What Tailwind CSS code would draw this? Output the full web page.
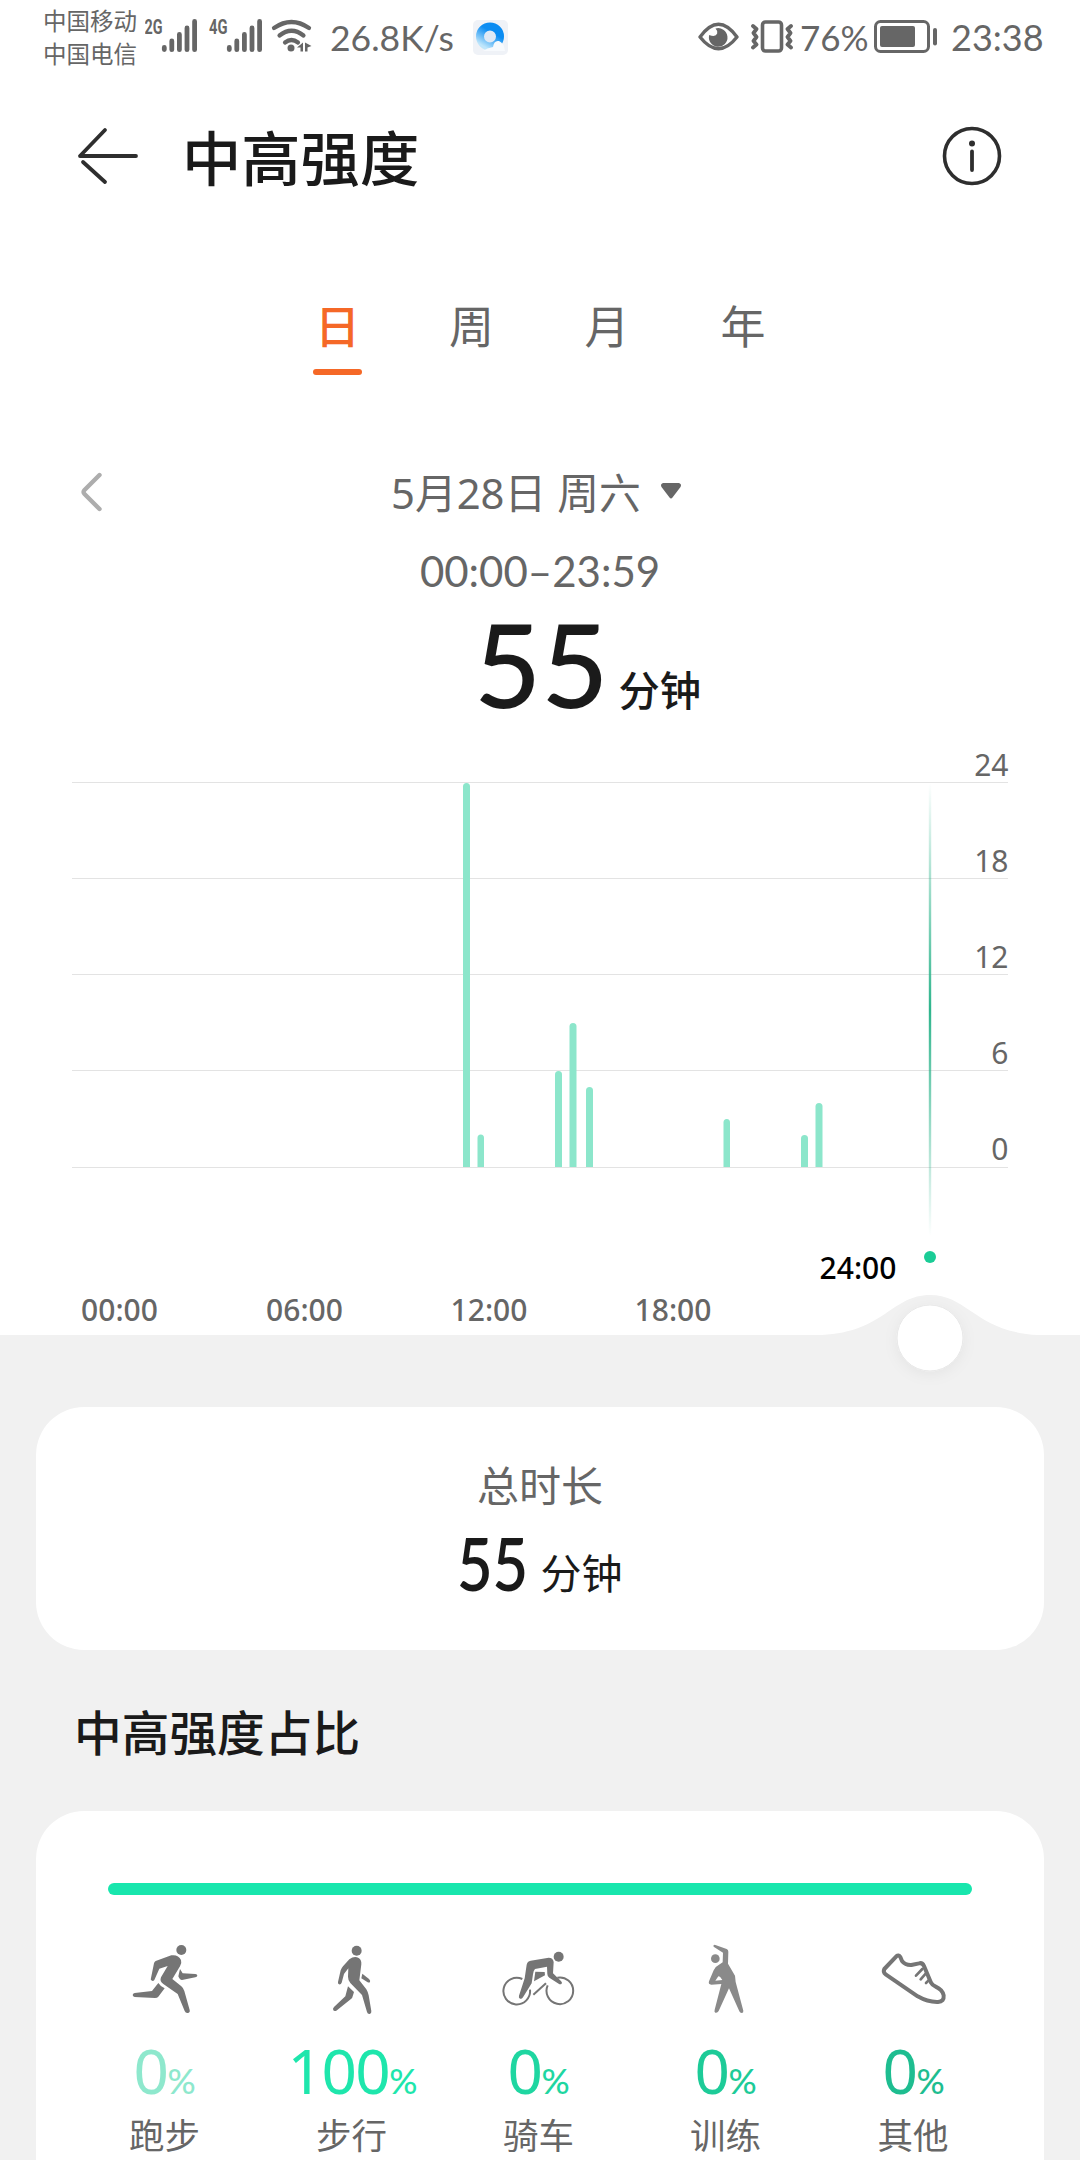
<!DOCTYPE html>
<html lang="zh-CN">
<head>
    <meta charset="UTF-8">
    <meta name="viewport" content="width=device-width, initial-scale=1.0">
    <title>中高强度</title>

    <!-- Tailwind CSS -->
    <script src="https://cdn.jsdelivr.net/npm/@tailwindcss/browser@4"></script>
</head>
<body class="w-[1080px] h-[2160px] overflow-hidden bg-white text-[#1a1a1a] font-['Noto_Sans','Noto_Sans_CJK_SC',sans-serif]">

    <!-- Status bar -->
    <div class="h-[76px] flex items-center text-[#666666] whitespace-nowrap">
        <div class="ml-[43px] w-[102px] text-[23.5px] leading-[33px] font-['Noto_Sans_CJK_SC',sans-serif] -mt-[3px]">
            <div>中国移动</div>
            <div>中国电信</div>
        </div>

        <!-- Signal 2G / 4G and wifi -->
        <svg class="w-[170px] h-[76px]" viewBox="145 0 170 76" fill="#666666">
            <g font-family="Roboto, sans-serif" font-weight="700" font-size="21">
                <text x="144.5" y="34" textLength="18" lengthAdjust="spacingAndGlyphs">2G</text>
                <text x="209" y="34" textLength="18.5" lengthAdjust="spacingAndGlyphs">4G</text>
            </g>
            <g stroke="#666666" stroke-width="4.8" stroke-linecap="round">
                <path d="M164.3 47.5v2M171.8 41v8.700M179.400 34.500v15.200M187 28v21.700M194.600 21.500v28.200" />
                <path d="M229.300 47.500v2M236.800 41v8.700M244.400 34.500v15.200M252 28v21.700M259.600 21.500v28.200" />
            </g>
            <g fill="none" stroke="#666666" stroke-width="4.2" stroke-linecap="round">
                <path d="M274 28q17.500-12 35 0" />
                <path d="M279.500 35.500q12-9.500 24 0" />
                <path d="M285 42.500q6.500-5 13 0" />
            </g>
            <circle cx="291" cy="48" r="3.500" />
            <path d="M297 47.500l6-5v9h-2.500v-4zM311.500 46l-6.500-3.500v9h2.500v-4z" />
        </svg>

        <span class="ml-[15px] w-[142px] -mt-px text-[35.500px] font-['Lato','Noto_Sans',sans-serif]">26.8K/s</span>

        <!-- Browser notification -->
        <svg class="ml-px w-[35px] h-[35px] -mt-px" viewBox="0 0 35 35">
            <defs>
                <linearGradient id="ring" x1="0.8" y1="0" x2="0.2" y2="1">
                    <stop offset="0.300" stop-color="#0a8cf2" />
                    <stop offset="1" stop-color="#bfe6fb" />
                </linearGradient>
            </defs>
            <rect width="35" height="35" rx="5" fill="#eff2f7" />
            <circle cx="17" cy="16.500" r="10" fill="#dfe9f5" stroke="url(#ring)" stroke-width="8" />
            <path d="M10 31q4-3 10-4q1-7 6-6q5 2 6 10z" fill="#f7fafd" />
        </svg>

        <div class="ml-auto mr-[37px] flex items-center">
            <!-- Eye comfort and vibrate -->
            <svg class="w-[102px] h-[76px]" viewBox="698 0 102 76">
                <path d="M700 37Q718.500 11.500 737 37Q718.500 60.500 700 37z" fill="none" stroke="#666666" stroke-width="3.400" stroke-linejoin="round" />
                <path d="M715.500 28.500a9.300 9.300 0 1 1-6.300 6.500q6.500 2.500 8-1.500q.8-2.500-1.700-5z" fill="#666666" />
                <rect x="762.500" y="22" width="19" height="29" rx="3" fill="none" stroke="#666666" stroke-width="3.600" />
                <path d="M753 26l3.500 3l-3 4l3 4l-3 4l3 3.500l-3.500 3M791 26l-3.500 3l3 4l-3 4l3 4l-3 3.500l3.500 3" fill="none" stroke="#666666" stroke-width="3.800" stroke-linecap="round" stroke-linejoin="round" />
            </svg>
            <span class="w-[74px] -mt-[2px] text-[35px] font-['Lato','Noto_Sans',sans-serif]">76%</span>
            <svg class="w-[65px] h-[76px]" viewBox="874 0 65 76" fill="#666666">
                <rect x="875.500" y="21.500" width="53" height="30" rx="5" fill="none" stroke="#666666" stroke-width="3" />
                <rect x="880" y="26" width="35" height="21" rx="2" />
                <rect x="933" y="28" width="4" height="17.500" rx="2" />
            </svg>
            <span class="ml-[12px] w-[92px] -mt-[2px] text-[36px] font-['Lato','Noto_Sans',sans-serif]">23:38</span>
        </div>
    </div>

    <!-- Title bar -->
    <header class="h-[160px] px-[78px] flex items-center">
        <svg class="w-[60px] h-[58px]" viewBox="0 0 60 58" fill="none" stroke="#2e2e2e" stroke-width="3.800" stroke-linecap="round" stroke-linejoin="round">
            <path d="M58 29H2L27 3M5 35L27 55" />
        </svg>
        <h1 class="ml-[44px] mt-[5px] text-[59.300px] leading-none font-medium">中高强度</h1>
        <svg class="ml-auto w-[60px] h-[60px]" viewBox="0 0 60 60">
            <circle cx="30" cy="30" r="27.500" fill="none" stroke="#2e2e2e" stroke-width="3.600" />
            <circle cx="30" cy="17.500" r="3" fill="#2e2e2e" />
            <path d="M30 25.500V44" stroke="#2e2e2e" stroke-width="3.800" stroke-linecap="round" />
        </svg>
    </header>

    <!-- Period tabs -->
    <nav class="h-[204px] pt-[57px] pl-[270px] flex text-[45px] leading-[68px] text-[#666666]">
        <div class="w-[135px] flex flex-col items-center text-[#f56827] font-medium">
            <span>日</span>
            <span class="mt-[8px] w-[49px] h-[6px] rounded-full bg-[#f56827]"></span>
        </div>
        <div class="w-[133px] text-center">周</div>
        <div class="w-[138px] text-center">月</div>
        <div class="w-[134px] text-center">年</div>
    </nav>

    <!-- Selected day and total -->
    <section class="h-[300px] text-[#666666]">
        <div class="h-[104px] flex items-center">
            <svg class="ml-[80px] w-[24px] h-[42px]" viewBox="0 0 24 42" fill="none" stroke="#adadad" stroke-width="4.400" stroke-linecap="round" stroke-linejoin="round">
                <path d="M19.500 4L4.500 19q-2 2 0 4L19.500 38" />
            </svg>
            <span class="ml-[287px] mt-[2px] text-[41.800px] leading-none whitespace-nowrap w-[268px]">5月28日 周六</span>
            <svg class="w-[24px] h-[18px] -mt-[3px]" viewBox="0 0 24 18" fill="#666666">
                <path d="M4 1h16q3 1 1.500 4L13.500 15.500q-1.500 2-3 0L2.500 5Q1 2 4 1z" />
            </svg>
        </div>
        <div class="h-[52px] text-[42px] leading-[54px] text-center font-['Lato','Noto_Sans',sans-serif]">00:00–23:59</div>
        <div class="h-[120px] pl-[474px] flex items-baseline text-[#1a1a1a] font-medium">
            <span class="text-[116px] leading-[132px] font-['Lato','Noto_Sans',sans-serif]"><span class="relative top-[2px]">55</span></span>
            <span class="ml-[10px] text-[41.300px]">分钟</span>
        </div>
    </section>

    <!-- Minutes per half hour -->
    <svg class="block w-[1080px] h-[660px]" viewBox="0 740 1080 660">
        <defs>
            <linearGradient id="cursor" x1="0" y1="0" x2="0" y2="1">
                <stop offset="0" stop-color="#2fb58d" stop-opacity="0" />
                <stop offset="0.500" stop-color="#2fb58d" />
                <stop offset="1" stop-color="#2fb58d" stop-opacity="0" />
            </linearGradient>
            <filter id="shadow" x="-50%" y="-50%" width="200%" height="200%">
                <feDropShadow dx="0" dy="3" stdDeviation="7" flood-color="#000000" flood-opacity="0.050" />
            </filter>
        </defs>
        <path d="M72 782.500H1008M72 878.500H1008M72 974.500H1008M72 1070.500H1008M72 1167.500H1008" stroke="#e3e3e3" />
        <g fill="#8ce6cb">
            <path d="M463 1167V786.500q0-3.500 3.500-3.500t3.500 3.500V1167z" />
            <path d="M477.500 1167v-29q0-3.500 3.250-3.500t3.250 3.500v29z" />
            <path d="M555 1167v-92.500q0-3.500 3.500-3.500t3.500 3.500v92.500z" />
            <path d="M569.500 1167v-140.500q0-3.500 3.500-3.500t3.500 3.500v140.500z" />
            <path d="M586 1167v-76.500q0-3.500 3.500-3.500t3.500 3.500v76.500z" />
            <path d="M723.500 1167v-44.500q0-3.500 3.250-3.500t3.250 3.500v44.500z" />
            <path d="M801 1167v-28.500q0-3.500 3.500-3.500t3.500 3.500v28.500z" />
            <path d="M815.500 1167v-60.500q0-3.500 3.500-3.500t3.500 3.500v60.500z" />
        </g>
        <g fill="#666666" font-size="30" text-anchor="end">
            <text x="1008.500" y="776">24</text>
            <text x="1008.500" y="872">18</text>
            <text x="1008.500" y="968">12</text>
            <text x="1008.500" y="1064">6</text>
            <text x="1008.500" y="1160">0</text>
        </g>
        <g fill="#666666" font-size="30" font-weight="500" text-anchor="middle">
            <text x="119.500" y="1321">00:00</text>
            <text x="304.500" y="1321">06:00</text>
            <text x="489" y="1321">12:00</text>
            <text x="673" y="1321">18:00</text>
        </g>
        <text x="858" y="1279" fill="#000000" font-size="30" font-weight="500" text-anchor="middle">24:00</text>
        <rect x="928.800" y="783" width="2.400" height="453" fill="url(#cursor)" />
        <circle cx="930" cy="1257" r="6" fill="#1acc96" />
        <!-- Slider track with bump -->
        <path d="M0 1335H822C884 1332 892 1295 930 1295S976 1332 1038 1335H1080V1400H0z" fill="#f1f1f1" />
        <circle cx="930" cy="1338" r="33" fill="#ffffff" stroke="#e8e8e8" filter="url(#shadow)" />
    </svg>

    <main class="h-[760px] bg-[#f1f1f1] px-[36px] pt-[7px]">
        <!-- Total duration -->
        <section class="h-[243px] rounded-[48px] bg-white flex flex-col items-center pt-[55px]">
            <div class="text-[42px] leading-[48px] text-[#666666]">总时长</div>
            <div class="mt-[3px] flex items-baseline font-semibold">
                <span class="w-[75px] text-[74px] leading-[96px] font-['Lato','Noto_Sans',sans-serif]"><span class="relative top-[2px] right-px inline-block origin-left scale-x-[0.83]">55</span></span>
                <span class="ml-[8px] text-[41px] font-normal">分钟</span>
            </div>
        </section>

        <h2 class="ml-[38px] h-[161px] leading-[165px] text-[47.700px] font-medium">中高强度占比</h2>

        <!-- Breakdown by activity -->
        <section class="h-[400px] rounded-t-[48px] bg-white pt-[72px]">
            <div class="mx-[72px] h-[12px] rounded-full bg-[#18e6ad]"></div>
            <div class="ml-[35px] w-[935px] mt-[48px] grid grid-cols-5 text-[#666666]">
                <div class="flex flex-col items-center">
                    <svg class="w-[72px] h-[72px] overflow-visible" viewBox="57 69 216 216" fill="#757575">
                        <circle cx="214" cy="90" r="15" />
                        <path d="M137 123L184 106Q205 103 213 120Q216 129 210 139L187 177L214 199Q221 205 223 213L239 270Q241 278 233 279Q227 280 224 273L203 222L160 192Q148 184 153 172L173 138L148 146L133 180Q129 185 124 181Q121 179 123 174L132 130Q133 125 137 123z" />
                        <path d="M210 147L218 160L256 162Q262 163 262 167Q261 171 256 172L216 180Q209 180 205 169z" />
                        <path d="M145 189Q151 199 164 205L145 230Q142 234 135 234L74 231Q68 230 68 225Q68 220 74 219L126 213z" />
                    </svg>
                    <div class="mt-[10px] flex items-baseline leading-[90px] text-[#8ee8cd]"><span class="text-[62px] tracking-[-1.500px]">0</span><span class="text-[35px] font-medium font-['Lato','Noto_Sans',sans-serif]">%</span></div>
                    <div class="leading-[40px] text-[35.500px] -mt-[10px]">跑步</div>
                </div>
                <div class="flex flex-col items-center">
                    <svg class="w-[72px] h-[72px] overflow-visible" viewBox="618 69 216 216" fill="#757575">
                        <circle cx="740" cy="92" r="15" />
                        <path d="M718 118Q733 107 746 114Q755 119 754 133L748 181L769 208Q774 216 776 226L784 273Q785 281 779 282Q773 283 771 276L756 225L721 189Q714 181 714 170L715 145L702 162L695 188Q692 195 687 193Q683 191 684 186L692 151Q694 145 699 139z" />
                        <path d="M757 161L777 177Q782 182 780 186Q778 189 773 187L754 175z" />
                        <path d="M714 199L732 216L729 226Q728 234 722 238L679 272Q673 275 670 271Q667 266 672 261L706 229z" />
                    </svg>
                    <div class="mt-[10px] ml-[2px] flex items-baseline leading-[90px] text-[#1ee6ac]"><span class="text-[62px] tracking-[-1.500px]">100</span><span class="text-[35px] font-medium font-['Lato','Noto_Sans',sans-serif]">%</span></div>
                    <div class="leading-[40px] text-[35.500px] -mt-[10px]">步行</div>
                </div>
                <div class="flex flex-col items-center">
                    <svg class="w-[72px] h-[72px] overflow-visible" viewBox="99 69 216 216" fill="#757575">
                        <circle cx="266" cy="110" r="15" />
                        <path d="M157 177A40 40 0 1 0 180 209M233 196A40 40 0 1 0 262 173" fill="none" stroke="#757575" stroke-width="6" />
                        <path d="M190 224L228 190" stroke="#757575" stroke-width="6" />
                        <path d="M182 122L236 113Q249 113 251 126L249 160L272 182Q278 186 275 191Q271 194 266 191L238 173Q232 169 232 162L231 140L195 147Q190 152 189 163L185 190L159 232Q155 238 150 236Q145 233 147 227L164 175L170 134Q172 124 182 122z" />
                        <path d="M196 155L224 156L225 166L192 184z" />
                    </svg>
                    <div class="mt-[10px] flex items-baseline leading-[90px] text-[#1fd6a1]"><span class="text-[62px] tracking-[-1.500px]">0</span><span class="text-[35px] font-medium font-['Lato','Noto_Sans',sans-serif]">%</span></div>
                    <div class="leading-[40px] text-[35.500px] -mt-[10px]">骑车</div>
                </div>
                <div class="flex flex-col items-center">
                    <svg class="w-[72px] h-[72px] overflow-visible" viewBox="660 69 216 216" fill="#8a8a8a">
                        <circle cx="736" cy="116" r="13" />
                        <path fill-rule="evenodd" d="M734 74L770 87Q775 89 775 95L774 131L795 167L797 186L820 272Q821 279 815 279Q810 279 808 274L777 205L746 273Q742 280 736 278Q732 276 734 269L754 192L724 194Q714 194 717 184L731 151Q735 140 746 135L758 127L759 98L732 81Q727 76 734 74zM745 169L736 182L757 180L750 170z" />
                    </svg>
                    <div class="mt-[10px] flex items-baseline leading-[90px] text-[#1dcb98]"><span class="text-[62px] tracking-[-1.500px]">0</span><span class="text-[35px] font-medium font-['Lato','Noto_Sans',sans-serif]">%</span></div>
                    <div class="leading-[40px] text-[35.500px] -mt-[10px]">训练</div>
                </div>
                <div class="flex flex-col items-center">
                    <svg class="w-[72px] h-[72px] overflow-visible" viewBox="291 69 216 216" fill="none" stroke="#757575" stroke-width="12" stroke-linecap="round" stroke-linejoin="round">
                        <path d="M349 109Q356 103 361 111L366 123Q376 136 394 135L417 130Q427 127 432 138L453 188Q457 196 467 200Q487 209 491 226Q493 245 474 246Q444 247 413 229L317 163Q308 157 313 147z" />
                        <path d="M427 147L408 167M437 161L422 178M449 178L438 189" stroke-width="8" />
                    </svg>
                    <div class="mt-[10px] ml-[2px] flex items-baseline leading-[90px] text-[#1ebd90]"><span class="text-[62px] tracking-[-1.500px]">0</span><span class="text-[35px] font-medium font-['Lato','Noto_Sans',sans-serif]">%</span></div>
                    <div class="ml-px leading-[40px] text-[35.500px] -mt-[10px]">其他</div>
                </div>
            </div>
        </section>
    </main>

</body>
</html>
